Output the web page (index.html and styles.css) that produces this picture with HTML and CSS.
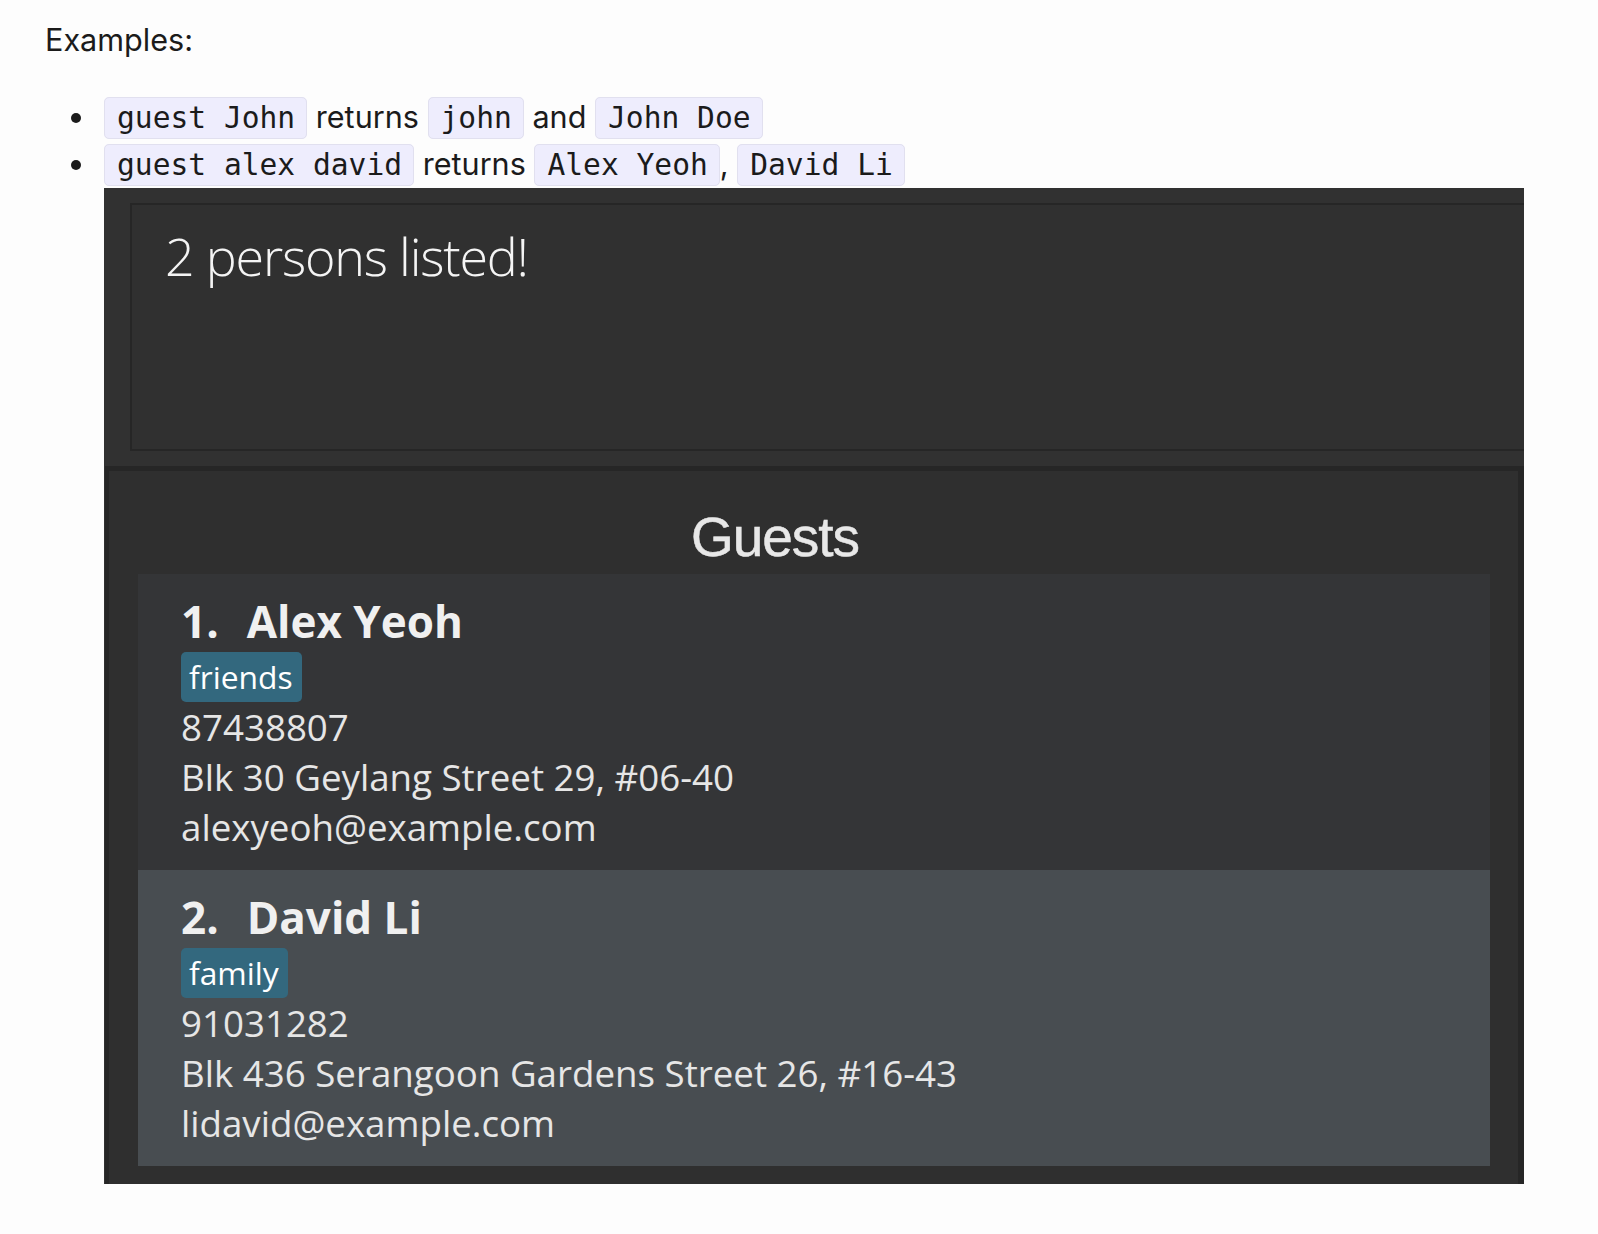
FILE: index.html
```html
<!DOCTYPE html>
<html lang="en">
<head>
<meta charset="utf-8">
<title>Examples</title>
<link rel="stylesheet" href="styles.css">
</head>
<body>
<main class="doc">
  <p class="lead">Examples:</p>
  <ul class="examples">
    <li class="example"><code class="code">guest John</code> returns <code class="code">john</code> and <code class="code">John Doe</code></li>
    <li class="example"><code class="code">guest alex david</code> returns <code class="code">Alex Yeoh</code>, <code class="code">David Li</code>
      <div class="app">
        <div class="result">
          <p class="result-text">2 persons listed!</p>
        </div>
        <section class="guests">
          <h2 class="guests-title">Guests</h2>
          <ol class="cards">
            <li class="card">
              <div class="card-name"><span class="card-index">1.</span>Alex Yeoh</div>
              <div class="tags"><span class="tag">friends</span></div>
              <div class="card-line">87438807</div>
              <div class="card-line">Blk 30 Geylang Street 29, #06-40</div>
              <div class="card-line">alexyeoh@example.com</div>
            </li>
            <li class="card card-selected">
              <div class="card-name"><span class="card-index">2.</span>David Li</div>
              <div class="tags"><span class="tag">family</span></div>
              <div class="card-line">91031282</div>
              <div class="card-line">Blk 436 Serangoon Gardens Street 26, #16-43</div>
              <div class="card-line">lidavid@example.com</div>
            </li>
          </ol>
        </section>
      </div>
    </li>
  </ul>
</main>
</body>
</html>
```
FILE: styles.css
```css
html, body {
  margin: 0;
  padding: 0;
  background: #fdfdfd;
}

.doc {
  padding: 0 0 0 45px;
  font-family: Inter, "Liberation Sans", sans-serif;
  font-size: 30.6px;
  color: #1b1b1b;
}

.lead {
  margin: 20px 0 0 0;
  line-height: 40px;
}

.examples {
  list-style: none;
  margin: 33px 0 0 0;
  padding: 0 0 0 59px;
}

.example {
  position: relative;
  line-height: 47px;
}

.example::before {
  content: "";
  position: absolute;
  left: -33px;
  top: 19.5px;
  width: 10px;
  height: 10px;
  border-radius: 50%;
  background: #1b1b1b;
}

.code {
  font-family: "DejaVu Sans Mono", "Liberation Mono", monospace;
  font-size: 29.6px;
  line-height: 40px;
  background: #eeedfd;
  border: 1px solid #e1e0ef;
  border-radius: 5px;
  padding: 3px 11px 3px 12px;
  color: #1b1b1b;
}

/* app screenshot */
.app {
  margin-top: 1px;
  width: 1420px;
  height: 996px;
  background: #313131;
  overflow: hidden;
  line-height: normal;
  display: flex;
  flex-direction: column;
}

.result {
  margin: 15px 0 0 26px;
  height: 229px;
  border: 2px solid #262626;
  border-right: 0;
  background: #303030;
  padding: 15px 0 0 33px;
}

.result-text {
  margin: 0;
  font-family: "Open Sans", sans-serif;
  font-weight: 300;
  font-size: 52px;
  letter-spacing: -1.2px;
  color: #f4f4f4;
}

.guests {
  margin: 15px 0 0 1px;
  flex: 1;
  border-style: solid;
  border-color: #262626;
  border-width: 5px 6px 0 4px;
  background: #2f2f2f;
  padding: 0 28px 0 29px;
}

.guests-title {
  margin: 36px 0 6px 0;
  padding-right: 78px;
  text-align: center;
  font-family: "Liberation Sans", Arial, sans-serif;
  font-weight: normal;
  font-size: 55px;
  letter-spacing: -1px;
  line-height: 61px;
  color: #e8e8e8;
  -webkit-text-stroke: 0.5px #e8e8e8;
}

.cards {
  list-style: none;
  margin: 0;
  padding: 0;
}

.card {
  background: #343537;
  padding: 17px 20px 18px 43px;
  font-family: "Open Sans", sans-serif;
  color: #ececec;
}

.card-selected {
  background: #484d51;
}

.card-name {
  font-weight: 700;
  font-size: 44px;
  line-height: 60px;
  color: #f0f0f0;
}

.card-index {
  display: inline-block;
  margin-right: 28px;
}

.tags {
  display: flex;
  margin-top: 1px;
}

.tag {
  background: #33687e;
  color: #ffffff;
  font-size: 31.8px;
  font-weight: 500;
  line-height: 44px;
  padding: 3px 9px 3px 8px;
  border-radius: 5px;
}

.card-line {
  font-size: 36.7px;
  line-height: 50px;
  color: #e6e6e6;
}
```
